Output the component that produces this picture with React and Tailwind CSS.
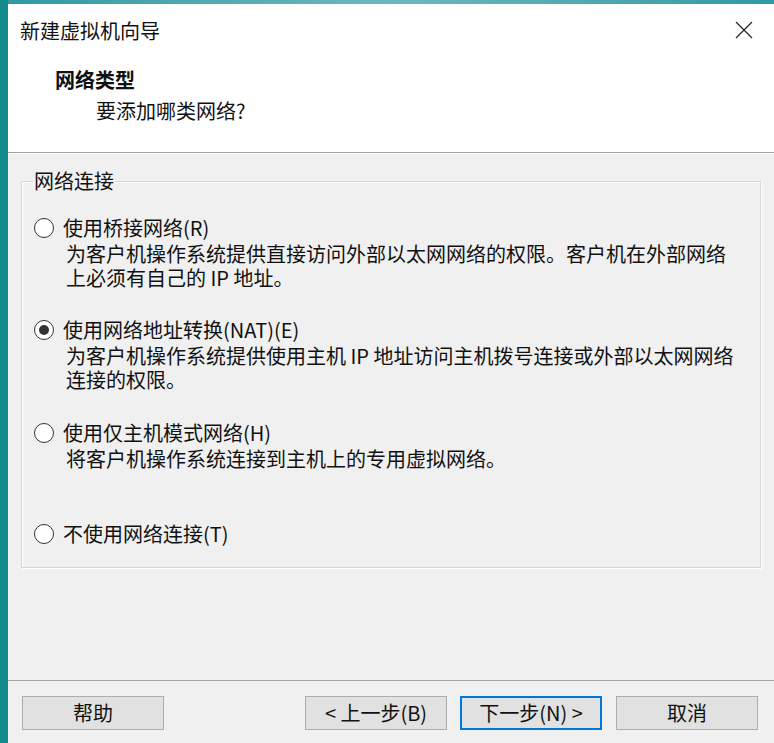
import React from "react";

const font = { fontFamily: '"Noto Sans CJK SC", "Noto Sans", sans-serif' };

function Radio({ checked }) {
  return (
    <span className="flex h-[20px] w-[20px] shrink-0 items-center justify-center rounded-full border border-[#333333] bg-white">
      {checked && <span className="h-[10px] w-[10px] rounded-full bg-[#333333]" />}
    </span>
  );
}

function Option({ checked, label, lines, className = "" }) {
  return (
    <div className={className}>
      <div className="flex h-[24px] items-center">
        <div className="ml-[2px] flex w-[29px] items-center">
          <Radio checked={checked} />
        </div>
        <span className="leading-[24px]">{label}</span>
      </div>
      {lines && (
        <div className="mt-[2px] pl-[34px] leading-[24px]">
          {lines.map((l, i) => (
            <div key={i}>{l}</div>
          ))}
        </div>
      )}
    </div>
  );
}

function Btn({ children, primary, className = "" }) {
  return (
    <button
      className={
        "flex h-[34px] w-[142px] items-center justify-center bg-[#e1e1e1] text-[20px] leading-none text-[#111] " +
        (primary ? "border-2 border-[#0078d7]" : "border border-[#adadad]") +
        " " +
        className
      }
    >
      {children}
    </button>
  );
}

export default function App() {
  return (
    <div
      className="flex h-[743px] w-[774px] overflow-hidden bg-[#12898b] text-[20px] text-[#111]"
      style={font}
    >
      <div className="w-[8px] shrink-0 bg-[#12898b]" />
      <div className="flex flex-1 flex-col">
        <div className="h-[4px] shrink-0 bg-gradient-to-r from-[#2f9aa3] via-[#6cb8c0] to-[#2f9aa3]" />
        <div className="flex flex-1 flex-col bg-[#f0f0f0]">
          {/* header */}
          <div className="h-[149px] shrink-0 border-b border-[#a0a0a0] bg-white">
            <div className="flex h-[54px] items-center justify-between pl-[12px] pr-[21px]">
              <span className="leading-[24px]">新建虚拟机向导</span>
              <svg width="18" height="18" viewBox="0 0 18 18" className="mb-[2px]">
                <path d="M1 1 L17 17 M17 1 L1 17" stroke="#222" strokeWidth="1.2" fill="none" />
              </svg>
            </div>
            <div className="pl-[47px] pt-[10px] font-bold leading-[24px]">网络类型</div>
            <div className="mt-[7px] pl-[88px] leading-[24px]">要添加哪类网络?</div>
          </div>
          <div className="h-px shrink-0 bg-white" />

          {/* body */}
          <div className="flex-1 pt-[15px]">
            <fieldset className="mx-[13px] border border-[#d5d5d5] pb-[21px] pl-[10px] pr-[10px] shadow-[inset_1px_1px_0_#ffffff,1px_1px_0_#ffffff]">
              <legend className="ml-[1px] px-[1px] leading-[24px]">网络连接</legend>
              <Option
                className="mt-[23px]"
                label="使用桥接网络(R)"
                lines={[
                  "为客户机操作系统提供直接访问外部以太网网络的权限。客户机在外部网络",
                  "上必须有自己的 IP 地址。",
                ]}
              />
              <Option
                className="mt-[28px]"
                checked
                label="使用网络地址转换(NAT)(E)"
                lines={[
                  "为客户机操作系统提供使用主机 IP 地址访问主机拨号连接或外部以太网网络",
                  "连接的权限。",
                ]}
              />
              <Option
                className="mt-[29px]"
                label="使用仅主机模式网络(H)"
                lines={["将客户机操作系统连接到主机上的专用虚拟网络。"]}
              />
              <Option className="mt-[51px]" label="不使用网络连接(T)" />
            </fieldset>
          </div>

          {/* footer */}
          <div className="h-[63px] shrink-0 border-t border-[#a0a0a0]">
            <div className="flex pl-[14px] pt-[15px]">
              <Btn>帮助</Btn>
              <Btn className="ml-[141px]">&lt; 上一步(B)</Btn>
              <Btn primary className="ml-[13px]">下一步(N) &gt;</Btn>
              <Btn className="ml-[14px]">取消</Btn>
            </div>
          </div>
        </div>
      </div>
    </div>
  );
}
